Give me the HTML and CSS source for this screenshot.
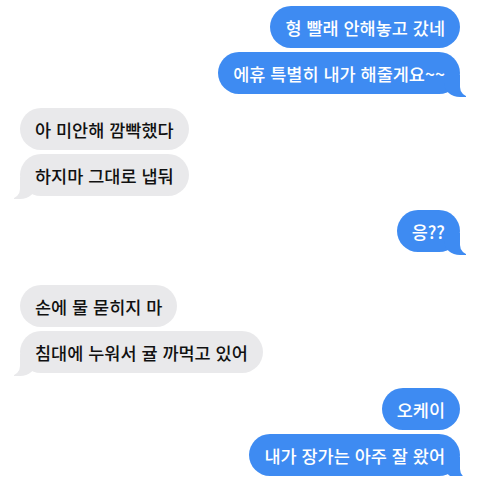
FILE: index.html
```html
<!DOCTYPE html>
<html lang="ko">
<head>
    <meta charset="UTF-8">
    <meta name="viewport" content="width=device-width, initial-scale=1.0">
    <title>Messages</title>
    <link rel="stylesheet" href="styles.css">
</head>
<body>
    <div class="chat">
        <div class="group sent g1">
            <div class="bubble">형 빨래 안해놓고 갔네</div>
            <div class="bubble tail">에휴 특별히 내가 해줄게요~~</div>
        </div>
        <div class="group received g2">
            <div class="bubble">아 미안해 깜빡했다</div>
            <div class="bubble tail">하지마 그대로 냅둬</div>
        </div>
        <div class="group sent g3">
            <div class="bubble tail">응??</div>
        </div>
        <div class="group received g4">
            <div class="bubble">손에 물 묻히지 마</div>
            <div class="bubble tail">침대에 누워서 귤 까먹고 있어</div>
        </div>
        <div class="group sent g5">
            <div class="bubble">오케이</div>
            <div class="bubble tail">내가 장가는 아주 잘 왔어</div>
        </div>
    </div>
</body>
</html>
```

FILE: styles.css
```css
body{
    margin: 0;
    padding: 0;
    background-color: #fff;
    font-family: "Noto Sans CJK KR", "Noto Sans", sans-serif;
}

.chat{
    display: flex;
    flex-direction: column;
    padding: 6px 20px 0 20px;
}

.group{
    display: flex;
    flex-direction: column;
    gap: 4px;
}

.sent{
    align-items: flex-end;
}

.received{
    align-items: flex-start;
}

.g2{ margin-top: 14px; }
.g3{ margin-top: 14px; }
.g4{ margin-top: 33px; }
.g5{ margin-top: 15px; }

.bubble{
    position: relative;
    z-index: 0;
    height: 42px;
    box-sizing: border-box;
    padding: 0 15px;
    display: flex;
    align-items: center;
    border-radius: 21px;
    font-size: 17.5px;
    font-weight: 500;
}

.sent .bubble{
    background-color: #3e8bf2;
    color: #fff;
}

.received .bubble{
    background-color: #e9e9eb;
    color: #111;
}

/* the little tail under the last bubble */
.tail::before,
.tail::after{
    content: "";
    position: absolute;
    bottom: -3px;
    height: 22px;
    z-index: -1;
}

.sent .tail::before{
    right: -6px;
    width: 22px;
    background-color: #3e8bf2;
    border-bottom-left-radius: 16px 14px;
}

.sent .tail::after{
    right: -12px;
    width: 12px;
    background-color: #fff;
    border-bottom-left-radius: 10px;
}

.received .tail::before{
    left: -6px;
    width: 22px;
    background-color: #e9e9eb;
    border-bottom-right-radius: 16px 14px;
}

.received .tail::after{
    left: -12px;
    width: 12px;
    background-color: #fff;
    border-bottom-right-radius: 10px;
}
```
